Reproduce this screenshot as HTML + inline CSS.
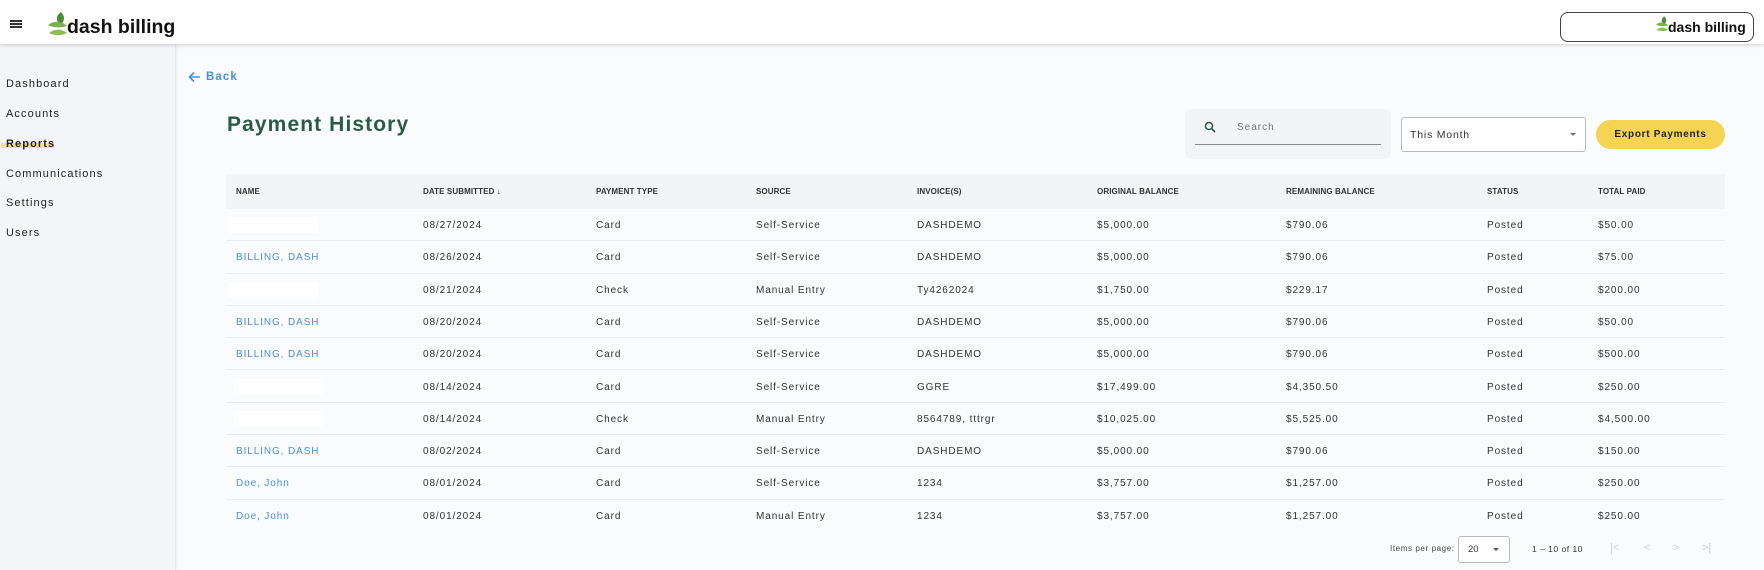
<!DOCTYPE html>
<html><head><meta charset="utf-8">
<style>
*{margin:0;padding:0;box-sizing:border-box}
body{width:1764px;height:570px;overflow:hidden;background:#fafbfc;font-family:"Liberation Sans",sans-serif;color:#222;position:relative}
.hdr{position:absolute;left:0;top:0;width:1764px;height:44px;background:#fff;box-shadow:0 1px 4px rgba(0,0,0,.18);z-index:3}
.side{position:absolute;left:0;top:44px;width:176px;height:526px;background:#f4f5f7;border-right:1px solid #e6e7ea;box-shadow:1px 0 3px rgba(0,0,0,.06)}
.side div{position:absolute;left:6px;font-size:11px;letter-spacing:1.1px;color:#222}
.abs{position:absolute}
.th{position:absolute;top:187px;font-size:8px;font-weight:bold;color:#333;letter-spacing:.1px}
.row{position:absolute;left:226px;width:1499px;height:32.3px;border-bottom:1.5px solid #ebedf0}
.row span{position:absolute;top:11px;font-size:10px;letter-spacing:.9px;color:#333;white-space:nowrap}
.row .lnk{color:#4a90e2}
.row .blank{top:8px;width:90px;height:16px;background:#fff}
</style></head><body>
<div class="hdr">
  <div class="abs" style="left:10px;top:20px;width:12px;height:2px;background:#333;box-shadow:0 3px 0 #333,0 6px 0 #333"></div>
  <svg class="abs" style="left:48px;top:12px" width="22" height="24" viewBox="0 0 22 24"><path d="M13 0 C7 4 8 10 13 13 C17 8 17 4 13 0Z" fill="#4f8a3a"/><path d="M0 13 C6 8 14 9 19 14 C12 16 6 16 0 13Z" fill="#7bb04a"/><path d="M1 21 C7 16 14 17 19 21 C13 24 7 24 1 21Z" fill="#8cc152"/></svg>
  <div class="abs" style="left:67px;top:16px;font-size:19.5px;font-weight:bold;color:#111;letter-spacing:0">dash billing</div>
  <div class="abs" style="left:1560px;top:12px;width:194px;height:30px;border:1.5px solid #444;border-radius:8px"></div>
  <svg class="abs" style="left:1656px;top:16px" width="14" height="16" viewBox="0 0 22 24"><path d="M13 0 C7 4 8 10 13 13 C17 8 17 4 13 0Z" fill="#4f8a3a"/><path d="M0 13 C6 8 14 9 19 14 C12 16 6 16 0 13Z" fill="#7bb04a"/><path d="M1 21 C7 16 14 17 19 21 C13 24 7 24 1 21Z" fill="#8cc152"/></svg>
  <div class="abs" style="left:1668px;top:19px;font-size:14px;font-weight:bold;color:#111">dash billing</div>
</div>
<div class="side">
  <div style="top:34px">Dashboard</div>
  <div style="top:64px">Accounts</div>
  <div class="abs" style="left:1px;top:99px;width:53px;height:5px;background:#f9e08a"></div>
  <div style="top:94px;font-weight:bold">Reports</div>
  <div style="top:124px">Communications</div>
  <div style="top:153px">Settings</div>
  <div style="top:183px">Users</div>
</div>
<svg class="abs" style="left:188px;top:71px" width="13" height="12" viewBox="0 0 13 12"><path d="M12 6H2M6 1.5L1.5 6 6 10.5" stroke="#4a90e2" stroke-width="1.6" fill="none"/></svg>
<div class="abs" style="left:206px;top:71px;font-size:11.5px;font-weight:bold;color:#4a90e2;letter-spacing:1.1px">Back</div>
<div class="abs" style="left:227px;top:113px;font-size:21px;font-weight:bold;color:#2a5b45;letter-spacing:1.1px">Payment History</div>

<div class="abs" style="left:1185px;top:109px;width:206px;height:50px;background:#f3f4f6;border-radius:6px"></div>
<div class="abs" style="left:1195px;top:144px;width:186px;height:1px;background:#8a8a8a"></div>
<svg class="abs" style="left:1204px;top:121px" width="12" height="12" viewBox="0 0 12 12"><circle cx="5" cy="5" r="3.5" stroke="#2a5b45" stroke-width="1.5" fill="none"/><path d="M7.5 7.5L11 11" stroke="#2a5b45" stroke-width="1.6"/></svg>
<div class="abs" style="left:1237px;top:122px;font-size:10px;color:#777;letter-spacing:1px">Search</div>
<div class="abs" style="left:1401px;top:117px;width:185px;height:35px;border:1px solid #bbb;border-radius:3px;background:#fff"></div>
<div class="abs" style="left:1410px;top:129px;font-size:10.5px;color:#333;letter-spacing:.8px">This Month</div>
<div class="abs" style="left:1570px;top:133px;border-left:3.5px solid transparent;border-right:3.5px solid transparent;border-top:3.5px solid #777"></div>
<div class="abs" style="left:1596px;top:120px;width:129px;height:29px;background:#f5d453;border-radius:15px;font-size:10px;font-weight:bold;color:#222;text-align:center;line-height:29px;letter-spacing:.7px">Export Payments</div>

<div class="abs" style="left:226px;top:174px;width:1499px;height:35px;background:#f3f4f6"></div>
<div class="th" style="left:236px">NAME</div>
<div class="th" style="left:423px">DATE SUBMITTED &#8595;</div>
<div class="th" style="left:596px">PAYMENT TYPE</div>
<div class="th" style="left:756px">SOURCE</div>
<div class="th" style="left:917px">INVOICE(S)</div>
<div class="th" style="left:1097px">ORIGINAL BALANCE</div>
<div class="th" style="left:1286px">REMAINING BALANCE</div>
<div class="th" style="left:1487px">STATUS</div>
<div class="th" style="left:1598px">TOTAL PAID</div>

<div class="row" style="top:209px"><span class="blank" style="left:2px"></span><span style="left:197px">08/27/2024</span><span style="left:370px">Card</span><span style="left:530px">Self-Service</span><span style="left:691px">DASHDEMO</span><span style="left:871px">$5,000.00</span><span style="left:1060px">$790.06</span><span style="left:1261px">Posted</span><span style="left:1372px">$50.00</span></div>
<div class="row" style="top:241.3px"><span class="lnk" style="left:10px">BILLING, DASH</span><span style="left:197px">08/26/2024</span><span style="left:370px">Card</span><span style="left:530px">Self-Service</span><span style="left:691px">DASHDEMO</span><span style="left:871px">$5,000.00</span><span style="left:1060px">$790.06</span><span style="left:1261px">Posted</span><span style="left:1372px">$75.00</span></div>
<div class="row" style="top:273.6px"><span class="blank" style="left:2px"></span><span style="left:197px">08/21/2024</span><span style="left:370px">Check</span><span style="left:530px">Manual Entry</span><span style="left:691px">Ty4262024</span><span style="left:871px">$1,750.00</span><span style="left:1060px">$229.17</span><span style="left:1261px">Posted</span><span style="left:1372px">$200.00</span></div>
<div class="row" style="top:305.9px"><span class="lnk" style="left:10px">BILLING, DASH</span><span style="left:197px">08/20/2024</span><span style="left:370px">Card</span><span style="left:530px">Self-Service</span><span style="left:691px">DASHDEMO</span><span style="left:871px">$5,000.00</span><span style="left:1060px">$790.06</span><span style="left:1261px">Posted</span><span style="left:1372px">$50.00</span></div>
<div class="row" style="top:338.2px"><span class="lnk" style="left:10px">BILLING, DASH</span><span style="left:197px">08/20/2024</span><span style="left:370px">Card</span><span style="left:530px">Self-Service</span><span style="left:691px">DASHDEMO</span><span style="left:871px">$5,000.00</span><span style="left:1060px">$790.06</span><span style="left:1261px">Posted</span><span style="left:1372px">$500.00</span></div>
<div class="row" style="top:370.5px"><span class="blank" style="left:8px"></span><span style="left:197px">08/14/2024</span><span style="left:370px">Card</span><span style="left:530px">Self-Service</span><span style="left:691px">GGRE</span><span style="left:871px">$17,499.00</span><span style="left:1060px">$4,350.50</span><span style="left:1261px">Posted</span><span style="left:1372px">$250.00</span></div>
<div class="row" style="top:402.8px"><span class="blank" style="left:8px"></span><span style="left:197px">08/14/2024</span><span style="left:370px">Check</span><span style="left:530px">Manual Entry</span><span style="left:691px">8564789, tttrgr</span><span style="left:871px">$10,025.00</span><span style="left:1060px">$5,525.00</span><span style="left:1261px">Posted</span><span style="left:1372px">$4,500.00</span></div>
<div class="row" style="top:435.1px"><span class="lnk" style="left:10px">BILLING, DASH</span><span style="left:197px">08/02/2024</span><span style="left:370px">Card</span><span style="left:530px">Self-Service</span><span style="left:691px">DASHDEMO</span><span style="left:871px">$5,000.00</span><span style="left:1060px">$790.06</span><span style="left:1261px">Posted</span><span style="left:1372px">$150.00</span></div>
<div class="row" style="top:467.4px"><span class="lnk" style="left:10px">Doe, John</span><span style="left:197px">08/01/2024</span><span style="left:370px">Card</span><span style="left:530px">Self-Service</span><span style="left:691px">1234</span><span style="left:871px">$3,757.00</span><span style="left:1060px">$1,257.00</span><span style="left:1261px">Posted</span><span style="left:1372px">$250.00</span></div>
<div class="row" style="top:499.7px;border-bottom:none"><span class="lnk" style="left:10px">Doe, John</span><span style="left:197px">08/01/2024</span><span style="left:370px">Card</span><span style="left:530px">Manual Entry</span><span style="left:691px">1234</span><span style="left:871px">$3,757.00</span><span style="left:1060px">$1,257.00</span><span style="left:1261px">Posted</span><span style="left:1372px">$250.00</span></div>

<div class="abs" style="left:1390px;top:544px;font-size:8px;color:#444;letter-spacing:.6px">Items per page:</div>
<div class="abs" style="left:1458px;top:536px;width:52px;height:27px;border:1px solid #bbb;border-radius:3px;background:#fff"></div>
<div class="abs" style="left:1468px;top:544px;font-size:9.5px;color:#333">20</div>
<div class="abs" style="left:1493px;top:548px;border-left:3px solid transparent;border-right:3px solid transparent;border-top:3px solid #555"></div>
<div class="abs" style="left:1532px;top:544px;font-size:8.5px;color:#333;letter-spacing:.5px">1 – 10 of 10</div>
<div class="abs" style="left:1610px;top:542px;font-size:11px;color:#ccc">|&lt;</div>
<div class="abs" style="left:1644px;top:542px;font-size:11px;color:#ccc">&lt;</div>
<div class="abs" style="left:1673px;top:542px;font-size:11px;color:#ccc">&gt;</div>
<div class="abs" style="left:1702px;top:542px;font-size:11px;color:#ccc">&gt;|</div>
</body></html>
